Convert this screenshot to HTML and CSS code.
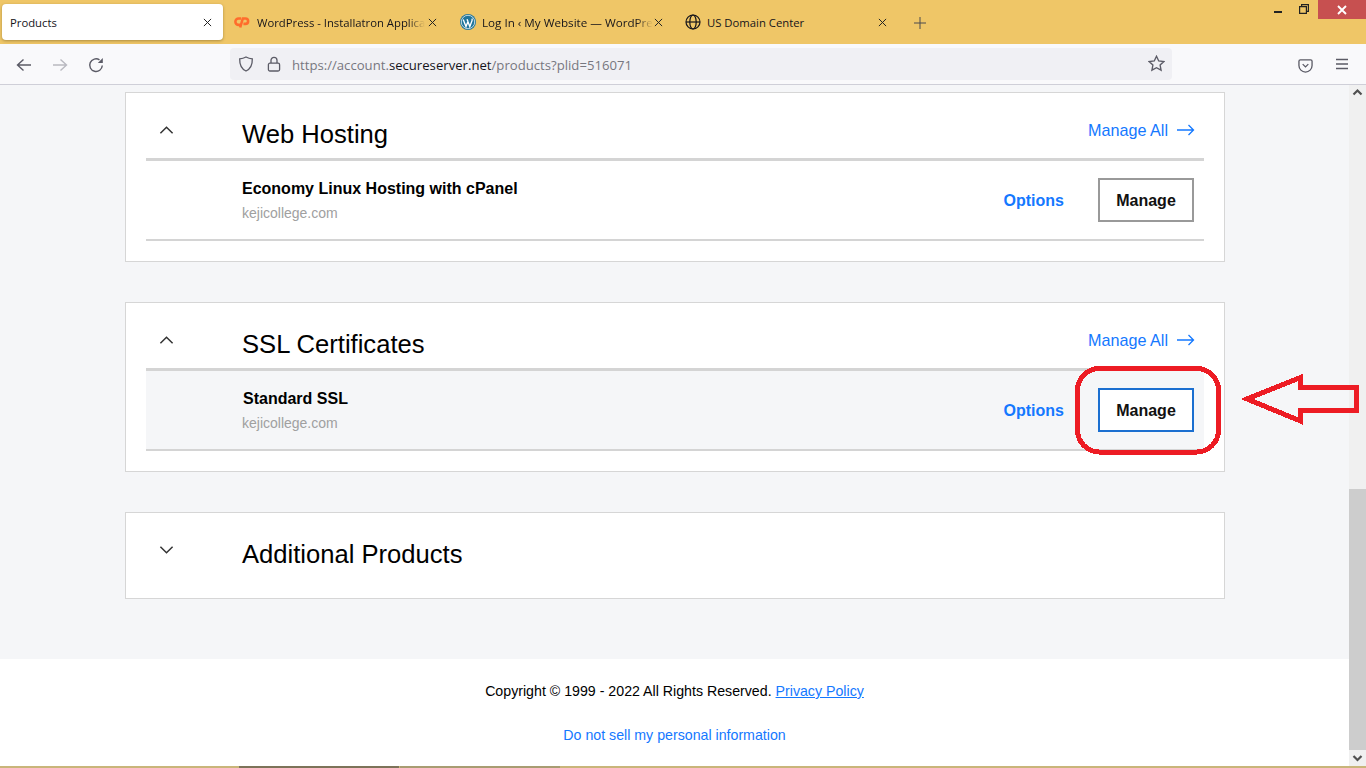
FILE: index.html
```html
<!DOCTYPE html>
<html lang="en">
<head>
<meta charset="utf-8">
<title>Products</title>
<link rel="stylesheet" href="styles.css">
</head>
<body>
<div class="browser">
  <header class="tabbar">
    <div class="tab tab-active"><span class="tab-label">Products</span>
      <svg class="tab-x" viewBox="0 0 10 10"><path d="M1 1l8 8M9 1l-8 8"/></svg></div>
    <div class="tab tab-cp">
      <svg class="favicon" viewBox="0 0 16 16"><path class="cp" d="M7 4.500H4.600a3.200 3.200 0 0 0 0 6.400H6M6.200 13.500l2.600-9h2.600a2.700 2.700 0 0 1 0 5.400H9.400"/></svg>
      <span class="tab-label tab-fade">WordPress - Installatron Applica</span>
      <svg class="tab-x" viewBox="0 0 10 10"><path d="M1 1l8 8M9 1l-8 8"/></svg></div>
    <div class="tab tab-wp">
      <svg class="favicon" viewBox="0 0 16 16"><circle class="wp-disc" cx="8" cy="8" r="8"/><circle class="wp-ring" cx="8" cy="8" r="6.700"/><path class="wp-w" d="M3.200 5.400l2.800 7.200 2-5.400-1-2M7 5.200l2.800 7.400 2.200-5.800c.4-1 .2-1.600-.2-2.200"/></svg>
      <span class="tab-label tab-fade">Log In ‹ My Website — WordPre</span>
      <svg class="tab-x" viewBox="0 0 10 10"><path d="M1 1l8 8M9 1l-8 8"/></svg></div>
    <div class="tab tab-us">
      <svg class="favicon" viewBox="0 0 16 16"><g class="globe"><circle cx="8" cy="8" r="7"/><ellipse cx="8" cy="8" rx="3.200" ry="7"/><path d="M1 8h14"/></g></svg>
      <span class="tab-label">US Domain Center</span>
      <svg class="tab-x" viewBox="0 0 10 10"><path d="M1 1l8 8M9 1l-8 8"/></svg></div>
    <svg class="newtab" viewBox="0 0 12 12"><path d="M6 0v12M0 6h12"/></svg>
    <div class="winbtns">
      <span class="win-min"></span>
      <svg class="win-restore" viewBox="0 0 10 10"><path d="M.6 2.600h6.800v6.800H.6zM2.600 2.600V.6h6.800v6.800H7.400"/></svg>
      <span class="win-close"><svg viewBox="0 0 10 10"><path d="M1 1l8 8M9 1l-8 8"/></svg></span>
    </div>
  </header>
  <nav class="toolbar">
    <svg class="tool" viewBox="0 0 16 16"><path d="M15 8H1.500M7.500 2.500L1.500 8l6 5.500"/></svg>
    <svg class="tool tool-dim" viewBox="0 0 16 16"><path d="M1 8h13.500M8.500 2.500l6 5.500-6 5.500"/></svg>
    <svg class="tool tool-reload" viewBox="0 0 16 16"><path d="M14.300 8.500A6.300 6.300 0 1 1 11.500 2.900"/><path class="reload-head" d="M14.800 1v5h-5z"/></svg>
    <div class="urlbar">
      <svg class="url-ico" viewBox="0 0 16 16"><path d="M8 1c2 1.100 4 1.700 6.300 1.900C14.500 9 12 13 8 15 4 13 1.500 9 1.700 2.900 4 2.700 6 2.100 8 1z"/></svg>
      <svg class="url-ico" viewBox="0 0 16 16"><rect x="2.400" y="7.200" width="11.200" height="7.800" rx="1.500"/><path d="M5 7V4.300a3 3 0 0 1 6 0V7"/></svg>
      <span class="url"><span class="url-dim">https://account.</span>secureserver.net<span class="url-dim">/products?plid=516071</span></span>
      <svg class="url-star" viewBox="0 0 16 16"><path d="M8 1.200l2.100 4.400 4.800.6-3.500 3.300.9 4.800L8 12l-4.300 2.300.9-4.800L1.100 6.200l4.800-.6z"/></svg>
    </div>
    <svg class="tool pocket" viewBox="0 0 16 16"><path d="M2.500 2h11A1.500 1.500 0 0 1 15 3.500V8a7 7 0 0 1-14 0V3.500A1.500 1.500 0 0 1 2.500 2zM5 6.500l3 3 3-3"/></svg>
    <svg class="tool menu" viewBox="0 0 14 12"><path d="M1 1.500h12M1 6h12M1 10.500h12"/></svg>
  </nav>
  <div class="viewport">
    <div class="page">
      <main class="content">
        <section class="card">
          <div class="card-head">
            <svg class="chev" viewBox="0 0 16 10"><path d="M1.500 8.500L8 2l6.500 6.500"/></svg>
            <h2>Web Hosting</h2>
            <a class="manage-all">Manage All <svg viewBox="0 0 18 12"><path d="M0 6h16.500M11.500 1l5 5-5 5"/></svg></a>
          </div>
          <div class="row">
            <div class="row-info"><div class="row-name">Economy Linux Hosting with cPanel</div><div class="row-domain">kejicollege.com</div></div>
            <a class="options">Options</a>
            <button class="btn">Manage</button>
          </div>
        </section>
        <section class="card">
          <div class="card-head">
            <svg class="chev" viewBox="0 0 16 10"><path d="M1.500 8.500L8 2l6.500 6.500"/></svg>
            <h2>SSL Certificates</h2>
            <a class="manage-all">Manage All <svg viewBox="0 0 18 12"><path d="M0 6h16.500M11.500 1l5 5-5 5"/></svg></a>
          </div>
          <div class="row row-hover">
            <div class="row-info"><div class="row-name">Standard SSL</div><div class="row-domain">kejicollege.com</div></div>
            <a class="options">Options</a>
            <button class="btn btn-focus">Manage</button>
          </div>
        </section>
        <section class="card card-closed">
          <div class="card-head">
            <svg class="chev" viewBox="0 0 16 10"><path d="M1.500 1.500L8 8l6.500-6.500"/></svg>
            <h2>Additional Products</h2>
          </div>
        </section>
      </main>
      <footer class="footer">
        <p>Copyright © 1999 - 2022 All Rights Reserved. <a class="policy">Privacy Policy</a></p>
        <p><a class="donot">Do not sell my personal information</a></p>
      </footer>
    </div>
    <aside class="scrollbar">
      <svg class="sb-arrow" viewBox="0 0 17 17"><path d="M4.500 9.500l4-4 4 4"/></svg>
      <div class="sb-track"><div class="sb-thumb"></div></div>
      <svg class="sb-arrow sb-arrow-end" viewBox="0 0 17 16"><path d="M4.500 6l4 4 4-4"/></svg>
    </aside>
  </div>
  <div class="taskbar"><span class="task task-dark"></span><span class="task task-mid"></span></div>
  <svg class="annotation" viewBox="0 0 1366 768">
    <rect x="1077.500" y="368.500" width="141" height="83.500" rx="22"/>
    <path d="M1247 399L1300.500 377.500V387.500H1356V410.500H1300.500V421Z"/>
  </svg>
</div>
</body>
</html>
```
FILE: styles.css
```css
* { box-sizing: border-box; }
html, body { margin: 0; height: 100%; overflow: hidden; }
body { font-family: "Liberation Sans", Arial, sans-serif; color: #000; background: #fff; }
.browser { position: relative; width: 1366px; height: 768px; display: flex; flex-direction: column; overflow: hidden; }

.tabbar { height: 44px; background: #efc667; display: flex; align-items: flex-start; padding: 4px 0 0 2px; flex: none; }
.tab { height: 36px; display: flex; align-items: center; font: 11.300px "Open Sans", "Noto Sans", sans-serif; color: #15141a; position: relative; flex: none; }
.tab-label { white-space: nowrap; }
.tab-fade { -webkit-mask-image: linear-gradient(to right, #000 90%, transparent); mask-image: linear-gradient(to right, #000 90%, transparent); }
.tab-x { width: 9px; height: 9px; fill: none; stroke: #222; stroke-width: 1.100; position: absolute; top: 14px; }
.tab-active { width: 221px; background: #fff; border-radius: 4px; box-shadow: 0 1px 3px rgba(90, 70, 20, .45); padding-left: 8px; }
.tab-active .tab-x { left: 201px; }
.tab-cp { width: 225px; margin-left: 10px; padding-left: 1px; }
.tab-cp .favicon { margin-right: 7px; }
.tab-cp .tab-x { left: 195px; }
.tab-wp { width: 225px; padding-left: 2px; font-size: 11.650px; }
.tab-wp .tab-x { left: 196px; }
.tab-us { width: 212px; padding-left: 2px; }
.tab-us .tab-x { left: 195px; }
.favicon { width: 16px; height: 16px; margin-right: 6px; flex: none; }
.cp { fill: none; stroke: #ff6c2c; stroke-width: 2.600; }
.wp-disc { fill: #21759b; }
.wp-ring { fill: none; stroke: #fff; stroke-width: .7; }
.wp-w { fill: none; stroke: #fff; stroke-width: 1.300; }
.globe { fill: none; stroke: #15141a; stroke-width: 1.200; }
.newtab { width: 12px; height: 12px; margin: 13px 0 0 19px; fill: none; stroke: #4a4a4f; stroke-width: 1; flex: none; }
.winbtns { margin-left: auto; margin-top: -4px; display: flex; align-items: flex-start; height: 19px; }
.win-min { width: 8px; height: 2px; background: #222; margin: 11px 17px 0 0; }
.win-restore { width: 10px; height: 10px; margin: 4px 9px 0 0; fill: none; stroke: #222; stroke-width: 1.200; }
.win-close { width: 48px; height: 19px; background: #c75050; display: flex; align-items: center; justify-content: center; }
.win-close svg { width: 10px; height: 10px; fill: none; stroke: #fff; stroke-width: 1.900; }

.toolbar { height: 41px; background: #f9f9fb; border-bottom: 1px solid #cfcfd8; display: flex; align-items: center; flex: none; padding: 0 0 0 16px; }
.tool { width: 16px; height: 16px; fill: none; stroke: #5b5b66; stroke-width: 1.400; flex: none; margin: 2px 20px 0 0; }
.tool-dim { stroke: #b9b9c0; }
.tool-reload { margin-right: 0; }
.reload-head { fill: #5b5b66; stroke: none; }
.urlbar { width: 942px; height: 32px; background: #f0f0f4; border-radius: 4px; margin-left: 126px; margin-right: 20px; display: flex; align-items: center; padding: 0 7px 0 8px; margin-top: -1px; flex: none; }
.url-ico { width: 16px; height: 16px; fill: none; stroke: #5b5b66; stroke-width: 1.300; margin-right: 12px; flex: none; }
.url { font: 13.150px "Open Sans", "Noto Sans", sans-serif; color: #15141a; white-space: nowrap; margin: 2px 0 0 -2px; }
.url-dim { color: #77777f; }
.url-star { width: 17px; height: 17px; fill: none; stroke: #5b5b66; stroke-width: 1.300; margin-left: auto; }
.pocket { margin-left: 106px; margin-right: 22px; width: 15px; height: 15px; }
.menu { width: 14px; height: 12px; margin: 0; }

.viewport { flex: 1; display: flex; min-height: 0; }
.page { flex: 1; background: #f5f6f8; display: flex; flex-direction: column; overflow: hidden; }
.content { flex: 1; padding: 7px 124px 0 125px; display: flex; flex-direction: column; gap: 40px; }
.card { width: 1100px; height: 170px; background: #fff; border: 1px solid #d6d6d6; padding: 0 20px; flex: none; }
.card-closed { height: 87px; }
.card-head { height: 65px; display: flex; align-items: center; position: relative; padding-left: 96px; }
.card-closed .card-head { height: 81px; }
.chev { position: absolute; left: 13px; top: 32px; width: 15px; height: 10px; fill: none; stroke: #333; stroke-width: 1.600; }
.card-head h2 { margin: 16px 0 0; font-size: 25.600px; font-weight: 400; line-height: 30px; }
.card-closed h2 { margin-top: 0; }
.manage-all { margin-left: auto; margin-right: 9px; margin-top: 9px; font-size: 16.200px; color: #1478ff; display: flex; align-items: center; gap: 9px; }
.manage-all svg { width: 18px; height: 12px; fill: none; stroke: #1478ff; stroke-width: 1.300; }
.row { height: 83px; border-top: 3px solid #d4d4d4; border-bottom: 2px solid #d4d4d4; display: flex; align-items: center; padding: 0 10px 0 96px; }
.row-hover { background: #f5f6f8; }
.row-info { flex: 1; margin-top: 1px; }
.row-name { font-size: 16px; font-weight: 700; line-height: 20px; }
.row-hover .row-name { padding-left: 1px; }
.row-domain { font-size: 14px; color: #a0a0a0; line-height: 20px; margin-top: 4px; }
.options { font-size: 16px; font-weight: 700; color: #1478ff; margin: 2px 34px 0 0; }
.btn { width: 96px; height: 44px; background: #fff; border: 2px solid #999; font: 700 16px "Liberation Sans", Arial, sans-serif; color: #111; padding: 2px 0 0; }
.btn-focus { border-color: #1b6fd0; }

.footer { height: 107px; background: #fff; flex: none; text-align: center; font-size: 14.200px; padding: 24px 0 0; }
.footer p { margin: 0 0 28px; line-height: 16px; }
.policy { color: #1478ff; text-decoration: underline; }
.donot { color: #1478ff; }

.scrollbar { width: 17px; background: #f0f0f0; display: flex; flex-direction: column; flex: none; }
.sb-arrow { width: 17px; height: 17px; fill: none; stroke: #505050; stroke-width: 2.200; flex: none; }
.sb-arrow-end { height: 16px; }
.sb-track { flex: 1; display: flex; flex-direction: column; justify-content: flex-end; }
.sb-thumb { height: 261px; background: #cdcdcd; }

.taskbar { height: 2px; background: #c9b57a; flex: none; display: flex; padding-left: 239px; }
.task { height: 2px; width: 160px; }
.task-dark { background: #7d7359; }
.task-mid { background: #a89c72; margin-left: 1px; }
.annotation { position: absolute; left: 0; top: 0; width: 1366px; height: 768px; fill: none; stroke: #ed1c24; stroke-width: 5; pointer-events: none; shape-rendering: crispEdges; }
```
